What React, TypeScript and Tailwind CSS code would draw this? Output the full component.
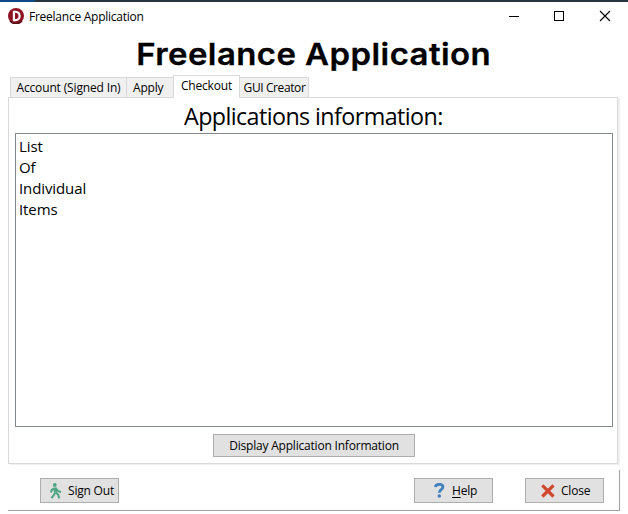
import type { ReactNode } from "react";

function WalkIcon() {
  return (
    <svg width="12" height="16" viewBox="0 0 12 16" fill="none" stroke="#4fa583" strokeWidth="2" className="shrink-0">
      <circle cx="4.8" cy="2" r="1.9" fill="#4fa583" stroke="none" />
      <path d="M5 4.5 5.6 9.5" strokeWidth="3.2" />
      <path d="M4.5 5.5 1.6 7 1 9.6M6 5.3 8 8 11 9.2M5 9.5 4 12 1.4 15.2M6 9.5 8.2 11.8 9.3 15.4" />
    </svg>
  );
}

function QuestionIcon() {
  return (
    <svg width="11" height="15" viewBox="0 0 11 15" fill="none" stroke="#4481bd" className="shrink-0">
      <path d="M1.4 4C2 .7 8.8 .4 8.9 4 9 6.4 5.3 6.4 5.3 9.8" strokeWidth="2.9" />
      <circle cx="5.3" cy="13" r="1.8" fill="#4481bd" stroke="none" />
    </svg>
  );
}

function CrossIcon() {
  return (
    <svg width="14" height="14" viewBox="0 0 14 14" fill="none" stroke="#d0482f" strokeWidth="3.2" className="shrink-0">
      <path d="M1.3 1.3 12.5 12.5M12.5 1.3 1.3 12.5" />
    </svg>
  );
}

function LogoIcon() {
  return (
    <svg width="16" height="16" viewBox="0 0 16 16" className="-mt-px shrink-0">
      <circle cx="8" cy="8" r="8" fill="#8e1624" />
      <path d="M2 13A8 8 0 0 0 14 13" fill="none" stroke="#541018" strokeWidth="1.5" />
      <path d="M5.9 3.7V12.1H7.5C13 12.1 13 3.7 7.5 3.7Z" fill="none" stroke="#fff" strokeWidth="2.1" />
    </svg>
  );
}

function Button({ className, children }: { className: string; children: ReactNode }) {
  return (
    <button className={`flex items-center border border-[#adadad] bg-[#e1e1e1] whitespace-nowrap ${className}`}>
      {children}
    </button>
  );
}

export default function App() {
  return (
    <div className="flex h-[514px] w-[628px] flex-col overflow-hidden bg-white font-['Open_Sans','Noto_Sans',sans-serif] text-[12px] leading-4 tracking-[-0.2px] text-black">
      <div className="flex h-[2px] shrink-0 bg-[#263440]">
        <div className="w-[35px] bg-[#0b4a82]" />
      </div>
      <header className="flex h-[29px] shrink-0 items-center pl-2">
        <LogoIcon />
        <span className="ml-[5px] grow tracking-[-0.25px]">Freelance Application</span>
        <svg width="119" height="12" viewBox="0 0 119 12" fill="none" stroke="#000" shapeRendering="crispEdges" className="mb-px">
          <path d="M0 6.5H10M45.5 1.5H54.5V10.5H45.5Z" />
          <path d="M91 1 101 11M101 1 91 11" shapeRendering="auto" strokeWidth="1.1" />
        </svg>
      </header>
      <h1 className="flex h-[44px] shrink-0 items-center justify-center pt-px font-['Inter',sans-serif] text-[30px] font-semibold tracking-[0.4px] whitespace-nowrap">
        <span className="block scale-x-[1.098] [-webkit-text-stroke:0.3px_black]">Freelance Application</span>
      </h1>
      <nav className="z-10 -mb-px flex h-[23px] shrink-0 items-end pl-[10px]">
        <div className="flex h-[21px] w-[117px] items-center justify-center border border-[#d9d9d9] bg-[#f0f0f0] tracking-[-0.15px] whitespace-nowrap">Account (Signed In)</div>
        <div className="flex h-[21px] w-[46px] items-center border-y border-[#d9d9d9] bg-[#f0f0f0] pl-[6px]">Apply</div>
        <div className="flex h-[23px] w-[67px] items-center justify-center border border-b-0 border-[#d9d9d9] bg-white pb-[2px]">Checkout</div>
        <div className="flex h-[21px] w-[69px] items-center justify-center border border-l-0 border-[#d9d9d9] bg-[#f0f0f0] pl-px tracking-[-0.4px] whitespace-nowrap">GUI Creator</div>
      </nav>
      <main className="ml-2 flex h-[367px] w-[610px] shrink-0 flex-col items-center border border-[#d9d9d9] pl-[2px] shadow-[2px_1px_0_0_#f0f0f0]">
        <h2 className="h-[35px] shrink-0 pr-[2px] text-[24px] leading-[36px] tracking-[-0.6px] whitespace-nowrap">
          <span className="block scale-x-[0.97]">Applications information:</span>
        </h2>
        <ul className="h-[294px] w-[598px] shrink-0 border border-[#828790] py-[2px] pl-[3px] text-[15px] leading-[21px] tracking-[-0.1px]">
          <li>List</li>
          <li>Of</li>
          <li>Individual</li>
          <li>Items</li>
        </ul>
        <Button className="mt-[7px] h-[23px] w-[202px] justify-center">Display Application Information</Button>
      </main>
      <footer className="mt-[6px] ml-2 flex h-[41px] w-[612px] shrink-0 items-start border-r border-b border-[#a0a0a0] pt-[8px] pl-[32px]">
        <Button className="h-[25px] w-[79px] gap-[6px] pl-[9px]"><WalkIcon />Sign Out</Button>
        <Button className="ml-[295px] h-[25px] w-[79px] gap-[7px] pl-[19px]">
          <QuestionIcon />
          <span><span className="underline underline-offset-2">H</span>elp</span>
        </Button>
        <Button className="ml-[32px] h-[25px] w-[79px] gap-[6px] pl-[15px]"><CrossIcon />Close</Button>
      </footer>
    </div>
  );
}
